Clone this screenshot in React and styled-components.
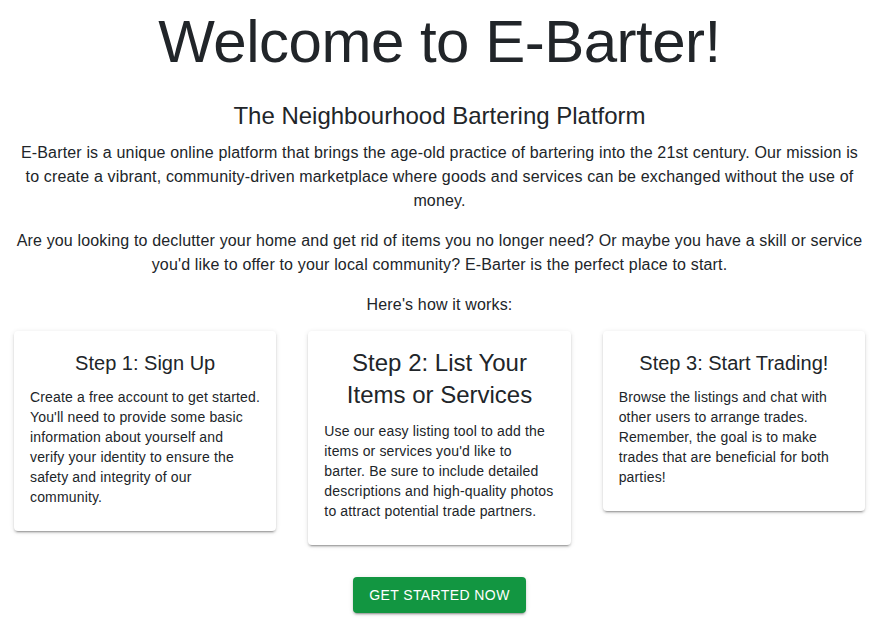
import React from 'react';
import styled, { createGlobalStyle } from 'styled-components';

const GlobalStyle = createGlobalStyle`
  html, body {
    margin: 0;
    padding: 0;
    background: #fff;
  }
  body {
    font-family: 'Liberation Sans', Arial, Helvetica, sans-serif;
    color: #212529;
  }
`;

const Page = styled.main`
  display: flex;
  flex-direction: column;
  align-items: stretch;
  padding: 6px 17px 20px 14px;
  text-align: center;
`;

const Title = styled.h1`
  margin: 0 0 22px;
  font-size: 60px;
  font-weight: 300;
  line-height: 72px;
  letter-spacing: -0.5px;
`;

const Subtitle = styled.h2`
  margin: 0 0 9px;
  font-size: 24px;
  font-weight: 400;
  line-height: 32px;
`;

const Paragraph = styled.p`
  margin: 0 0 ${(p) => (p.$tight ? '14px' : '16px')};
  font-size: 16px;
  line-height: 24px;
  letter-spacing: 0.16px;
`;

const Steps = styled.div`
  display: grid;
  grid-template-columns: repeat(3, 1fr);
  column-gap: 32px;
  align-items: start;
  margin-bottom: 32px;
`;

const Card = styled.section`
  background: #fff;
  border-radius: 4px;
  padding: 16px 16px 24px;
  box-shadow: 0 3px 1px -2px rgba(0, 0, 0, 0.2), 0 2px 2px 0 rgba(0, 0, 0, 0.14),
    0 1px 5px 0 rgba(0, 0, 0, 0.12);
`;

const CardTitle = styled.h3`
  margin: 0 0 ${(p) => (p.$large ? '10px' : '8px')};
  font-weight: 400;
  font-size: ${(p) => (p.$large ? '24px' : '20px')};
  line-height: 32px;
  text-align: center;
`;

const CardText = styled.p`
  margin: 0;
  font-size: 14px;
  line-height: 20px;
  letter-spacing: 0.16px;
  text-align: left;
`;

const Actions = styled.div`
  display: flex;
  justify-content: center;
`;

const StartButton = styled.button`
  border: 0;
  border-radius: 4px;
  background: #129641;
  color: #fff;
  font-family: inherit;
  font-size: 14px;
  font-weight: 500;
  letter-spacing: 0.4px;
  text-transform: uppercase;
  line-height: 24px;
  padding: 6px 16px;
  cursor: pointer;
  box-shadow: 0 3px 1px -2px rgba(0, 0, 0, 0.2), 0 2px 2px 0 rgba(0, 0, 0, 0.14),
    0 1px 5px 0 rgba(0, 0, 0, 0.12);
`;

const steps = [
  {
    title: 'Step 1: Sign Up',
    text: "Create a free account to get started. You'll need to provide some basic information about yourself and verify your identity to ensure the safety and integrity of our community.",
  },
  {
    title: 'Step 2: List Your Items or Services',
    large: true,
    text: "Use our easy listing tool to add the items or services you'd like to barter. Be sure to include detailed descriptions and high-quality photos to attract potential trade partners.",
  },
  {
    title: 'Step 3: Start Trading!',
    text: 'Browse the listings and chat with other users to arrange trades. Remember, the goal is to make trades that are beneficial for both parties!',
  },
];

const App = () => {
  return (
    <>
      <GlobalStyle />
      <Page>
        <Title>Welcome to E-Barter!</Title>
        <Subtitle>The Neighbourhood Bartering Platform</Subtitle>
        <Paragraph>
          E-Barter is a unique online platform that brings the age-old practice of bartering into the 21st century. Our mission is to create a vibrant, community-driven marketplace where goods and services can be exchanged without the use of money.
        </Paragraph>
        <Paragraph>
          Are you looking to declutter your home and get rid of items you no longer need? Or maybe you have a skill or service you'd like to offer to your local community? E-Barter is the perfect place to start.
        </Paragraph>
        <Paragraph $tight>Here's how it works:</Paragraph>
        <Steps>
          {steps.map((s) => (
            <Card key={s.title}>
              <CardTitle $large={s.large}>{s.title}</CardTitle>
              <CardText>{s.text}</CardText>
            </Card>
          ))}
        </Steps>
        <Actions>
          <StartButton>Get Started Now</StartButton>
        </Actions>
      </Page>
    </>
  );
};

export default App;
